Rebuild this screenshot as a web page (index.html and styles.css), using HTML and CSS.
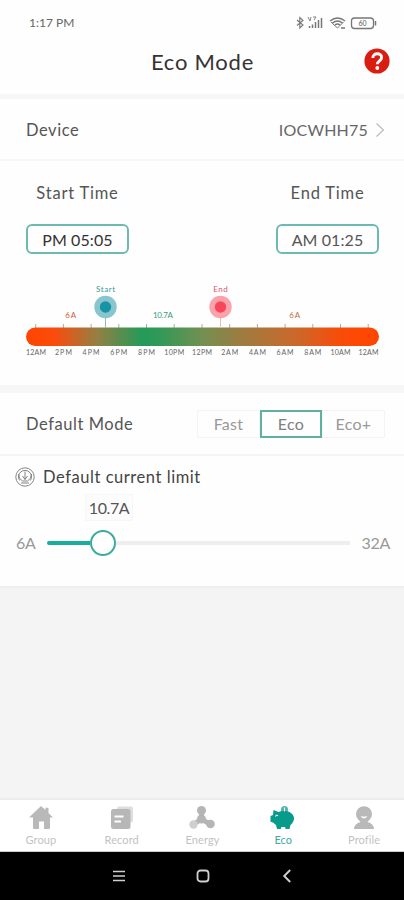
FILE: index.html
```
<!DOCTYPE html>
<html lang="en">
<head>
<meta charset="utf-8">
<title>Eco Mode</title>
<link rel="stylesheet" href="styles.css">
</head>
<body>
<div class="screen">
  <div class="status">
    <span class="clock">1:17 PM</span>
    <svg class="status-icons" width="84" height="16" viewBox="0 0 84 16" fill="none" stroke="#777">
      <path d="M2 5l6 5-3.200 3V2.500L8 5.500l-6 5" stroke-width="1.100"/>
      <path d="M14.500 13v-2M17.500 13V9.500M20.500 13V7M23.500 13V5M26.500 13V3" stroke-width="1.500"/>
      <path d="M13 2l2 4 1-4M18 2h3l-2 3" stroke-width=".9"/>
      <path d="M35 6q7.500-6 15 0M37.500 8q5-4 10 0M40 10q2.500-2 5 0" stroke-width="1.400"/>
      <path d="M36 7l6.500 6 6-6" stroke-width="1"/>
      <path d="M46 13h4" stroke-width="1.500"/>
      <rect x="56.500" y="3" width="22" height="10.500" rx="3" stroke-width="1.300"/>
      <path d="M80.500 6v4.500" stroke-width="1.500"/>
      <text x="67.500" y="11" class="battery" text-anchor="middle">60</text>
    </svg>
  </div>
  <header class="header">
    <h1>Eco Mode</h1>
    <svg class="help" width="26" height="26" viewBox="0 0 26 26">
      <circle cx="13" cy="13" r="12.600" fill="#d91e11"/>
      <path d="M8.800 10c0-5.800 8.800-5.500 8.800-.4 0 3.200-4.300 3.200-4.300 6.600" fill="none" stroke="#fff" stroke-width="2.900"/>
      <circle cx="13.300" cy="20" r="1.900" fill="#fff"/>
    </svg>
  </header>
  <section class="device">
    <span class="label">Device</span>
    <span class="device-name">IOCWHH75</span>
    <svg width="10" height="16" viewBox="0 0 10 16" fill="none" stroke="#bbb" stroke-width="1.200"><path d="M1.500 1.500L8.500 8l-7 6.500"/></svg>
  </section>
  <section class="schedule">
    <div class="times">
      <div class="time"><span class="time-label">Start Time</span><span class="time-box strong">PM 05:05</span></div>
      <div class="time"><span class="time-label">End Time</span><span class="time-box">AM 01:25</span></div>
    </div>
    <svg class="timeline" width="404" height="80" viewBox="0 280 404 80">
      <defs><linearGradient id="load">
        <stop offset="0" stop-color="#ff4500"/><stop offset=".08" stop-color="#fb4b0b"/><stop offset=".2" stop-color="#957f42"/><stop offset=".33" stop-color="#239a59"/><stop offset=".38" stop-color="#329957"/><stop offset=".5" stop-color="#729052"/><stop offset=".6" stop-color="#9a7d42"/><stop offset=".77" stop-color="#cc6729"/><stop offset=".89" stop-color="#f94c09"/><stop offset="1" stop-color="#ff4500"/>
      </linearGradient></defs>
      <path d="M35.700 324v5M63.400 324v5M91.100 324v5M118.800 324v5M146.500 324v5M174.200 324v5M202 324v5M229.700 324v5M257.400 324v5M285.100 324v5M312.800 324v5M340.500 324v5M368.200 324v5" stroke="#aaa"/>
      <rect x="26" y="327.500" width="353" height="18.500" rx="9.250" fill="url(#load)"/>
      <path d="M105.500 316v12" stroke="#9ab8bc"/><path d="M220.500 316v12" stroke="#e9bcc0"/>
      <circle cx="105.500" cy="307" r="11.200" fill="#87c5cf"/><circle cx="105.500" cy="307" r="5.700" fill="#1793a4"/>
      <circle cx="220.500" cy="307" r="11.200" fill="#fba3ab"/><circle cx="220.500" cy="307" r="5.700" fill="#f8465a"/>
      <g class="marks" text-anchor="middle">
        <text x="105.500" y="291.700" fill="#3a9a98" textLength="19">Start</text>
        <text x="220.500" y="291.700" fill="#d4576d" textLength="14.500">End</text>
        <text x="70.700" y="317.800" fill="#d45c30" textLength="11">6A</text>
        <text x="163" y="317.800" fill="#3a9a7a" textLength="20">10.7A</text>
        <text x="294.700" y="317.800" fill="#c96b3d" textLength="11">6A</text>
      </g>
      <g class="hours" text-anchor="middle">
        <text x="36" y="355.300" textLength="20">12AM</text><text x="63.400" y="355.300" textLength="17">2PM</text><text x="91.100" y="355.300" textLength="17">4PM</text><text x="118.800" y="355.300" textLength="17">6PM</text><text x="146.500" y="355.300" textLength="17">8PM</text><text x="174.200" y="355.300" textLength="20">10PM</text><text x="202" y="355.300" textLength="20">12PM</text><text x="229.700" y="355.300" textLength="17">2AM</text><text x="257.400" y="355.300" textLength="17">4AM</text><text x="285.100" y="355.300" textLength="17">6AM</text><text x="312.800" y="355.300" textLength="17">8AM</text><text x="340.500" y="355.300" textLength="20">10AM</text><text x="368.500" y="355.300" textLength="20">12AM</text>
      </g>
    </svg>
  </section>
  <section class="mode">
    <span class="label">Default Mode</span>
    <div class="tabs"><span class="tab">Fast</span><span class="tab active">Eco</span><span class="tab">Eco+</span></div>
  </section>
  <section class="limit">
    <div class="limit-title">
      <svg width="20" height="20" viewBox="0 0 20 20" fill="none" stroke="#777" stroke-width=".9"><circle cx="10" cy="10" r="9.200"/><path d="M4.600 13.500A6.500 6.500 0 1 1 15.400 13.500M3.500 7q0 5 4 7h5q4-2 4-7M10 4.500v8M7.500 9l2.500 3.500L12.500 9M6 16h8"/></svg>
      <span>Default current limit</span>
    </div>
    <div class="bubble">10.7A</div>
    <div class="slider">
      <span class="min">6A</span>
      <div class="track"><div class="fill"></div><div class="knob"></div><div class="rest"></div></div>
      <span class="max">32A</span>
    </div>
  </section>
  <main class="empty"></main>
  <nav class="nav">
    <div class="item"><svg width="26" height="26" viewBox="0 0 26 26" fill="#b9b9b9"><path d="M13 1l4.500 4V2.800h3V8L25 12.500h-3V23q0 1-1 1h-5v-7.500h-5V24H6q-1 0-1-1V12.500H1z"/></svg><span>Group</span></div>
    <div class="item"><svg width="26" height="26" viewBox="0 0 26 26"><rect x="8" y="1.500" width="16" height="16" rx="2" fill="#dedede"/><rect x="2" y="4" width="19.500" height="20" rx="2.500" fill="#b7b7b7"/><path d="M5.500 11.500h9M5.500 16.500h6.500" stroke="#fff" stroke-width="2"/></svg><span>Record</span></div>
    <div class="item"><svg width="26" height="26" viewBox="0 0 26 26" fill="#b5b5b5"><path d="M12.500 6v8l-6 4M12.500 14l8 5" fill="none" stroke="#b5b5b5" stroke-width="5"/><circle cx="12.500" cy="5.500" r="4.500"/><circle cx="12.500" cy="14" r="4.500"/><circle cx="4.500" cy="19.500" r="4.200" fill="#cfcfcf"/><circle cx="21.500" cy="19" r="4.300"/></svg><span>Energy</span></div>
    <div class="item current"><svg width="26" height="26" viewBox="0 0 26 26"><circle cx="14.500" cy="4.500" r="3.500" fill="#55b5aa"/><path d="M3.500 5l5 2q6-2.500 11 0 4 2 4.500 6 0 4-3.500 7l-1 4h-3.800l-.7-2h-3.500l-.8 2H7l-1-4-3-2.500-2.500-.8V11L3 10z" fill="#079b8c"/><path d="M14.500 2.500v4" stroke="#fff" stroke-width="1"/><path d="M5.500 11.500q1-2 2.500-.8" fill="none" stroke="#fff" stroke-width="1.200"/></svg><span>Eco</span></div>
    <div class="item"><svg width="26" height="26" viewBox="0 0 26 26" fill="#b9b9b9"><circle cx="13" cy="9.200" r="8"/><path d="M8 15h10l-1.500 2q6 1.500 6.500 7H3q.5-5.500 6.500-7z"/><path d="M9.500 11q3.500 1 7 0-3.500 5-7 0z" fill="#fff"/></svg><span>Profile</span></div>
  </nav>
  <div class="system">
    <svg width="14" height="14" viewBox="0 0 14 14" stroke="#d0d0d0" stroke-width="1.700"><path d="M1 2.500h12M1 7h12M1 11.500h12"/></svg>
    <svg width="14" height="14" viewBox="0 0 14 14" fill="none" stroke="#d0d0d0" stroke-width="1.800"><rect x="1.500" y="1.500" width="11" height="11" rx="3"/></svg>
    <svg width="14" height="14" viewBox="0 0 14 14" fill="none" stroke="#d0d0d0" stroke-width="1.900"><path d="M10.200 1L4.200 7l6 6"/></svg>
  </div>
</div>
</body>
</html>
```
FILE: styles.css
```
* { box-sizing: border-box; }
body { margin: 0; font-family: Lato, "Liberation Sans", sans-serif; color: #555; }
svg { display: block; flex: none; }
.screen { width: 404px; height: 900px; display: flex; flex-direction: column; background: #fefefe; overflow: hidden; }
.status { height: 42px; padding: 4px 25px 0 29px; display: flex; align-items: center; justify-content: space-between; }
.clock { font-size: 12px; letter-spacing: 0; color: #666; line-height: 14px; }
.battery { font-size: 7px; fill: #555; stroke: none; }
.header { height: 57px; padding: 1px 14px 15px; display: flex; align-items: center; justify-content: flex-end; border-bottom: 5px solid #f7f7f7; }
h1 { margin: 2px 110px 0 0; font-size: 22px; font-weight: 400; letter-spacing: .75px; color: #333; white-space: nowrap; line-height: 26px; }
.device { height: 62px; padding: 1px 19px 0 26px; display: flex; align-items: center; border-bottom: 2px solid #f7f7f7; }
.label { font-size: 16.500px; letter-spacing: .55px; }
.device-name { margin-left: auto; margin-right: 7px; font-size: 16px; letter-spacing: .2px; color: #666; }
.schedule { height: 232px; border-bottom: 8px solid #f6f6f6; }
.times { height: 119px; padding: 20px 25px 0 26px; display: flex; justify-content: space-between; }
.time { width: 103px; display: flex; flex-direction: column; align-items: center; gap: 19px; }
.time-label { font-size: 16.500px; letter-spacing: .8px; line-height: 24px; }
.time-box { width: 103px; height: 30px; border: 2px solid #6dbab0; border-radius: 6px; display: flex; align-items: center; justify-content: center; font-size: 16px; letter-spacing: .1px; }
.strong { color: #333; }
.marks { font-size: 8px; }
.hours { font-size: 7px; fill: #666; }
.mode { height: 63px; padding: 0 19px 0 26px; display: flex; align-items: center; justify-content: space-between; border-bottom: 2px solid #f4f4f4; }
.tabs { display: flex; color: #999; font-size: 16px; letter-spacing: .3px; }
.tab { width: 63px; height: 28px; border: 1px solid #f4f4f4; display: flex; align-items: center; justify-content: center; }
.active { border: 2px solid #5fb0a1; color: #808080; width: 62px; }
.limit { height: 132px; padding: 8px 14px 0 15px; border-bottom: 2px solid #efefef; }
.limit-title { display: flex; align-items: center; gap: 8px; height: 25px; font-size: 16.500px; letter-spacing: .55px; color: #444; }
.bubble { width: 48px; height: 27px; margin: 5px 0 0 70px; display: flex; align-items: center; justify-content: center; background: #fcfcfc; border: 1px solid #f7f7f7; font-size: 16px; letter-spacing: -.4px; }
.slider { display: flex; align-items: center; height: 28px; margin-top: 8px; font-size: 16px; color: #999; }
.min { width: 32px; padding-left: 1px; letter-spacing: -.3px; line-height: 16px; margin-top: -1px; }
.track { width: 303px; display: flex; align-items: center; }
.fill { width: 43px; height: 4px; border-radius: 2px 0 0 2px; background: #19ada0; }
.knob { width: 26px; height: 26px; border: 2px solid #3bab9f; border-radius: 50%; }
.rest { flex: 1; height: 4px; background: #eee; }
.max { margin-left: auto; letter-spacing: -.3px; line-height: 16px; margin-top: -1px; }
.empty { flex: 1; background: #f4f4f4; border-bottom: 2px solid #ededed; }
.nav { height: 52px; display: flex; background: #fff; border-bottom: 1px solid #ccc; }
.item { width: 80.800px; padding: 5px 0 0 1px; display: flex; flex-direction: column; align-items: center; font-size: 11px; line-height: 14px; color: #c2c2c2; letter-spacing: .1px; gap: 2px; }
.current { color: #3dab9e; }
.system { height: 48px; padding: 0 0 0 1px; background: #000; display: flex; align-items: center; justify-content: center; gap: 70px; }
```
